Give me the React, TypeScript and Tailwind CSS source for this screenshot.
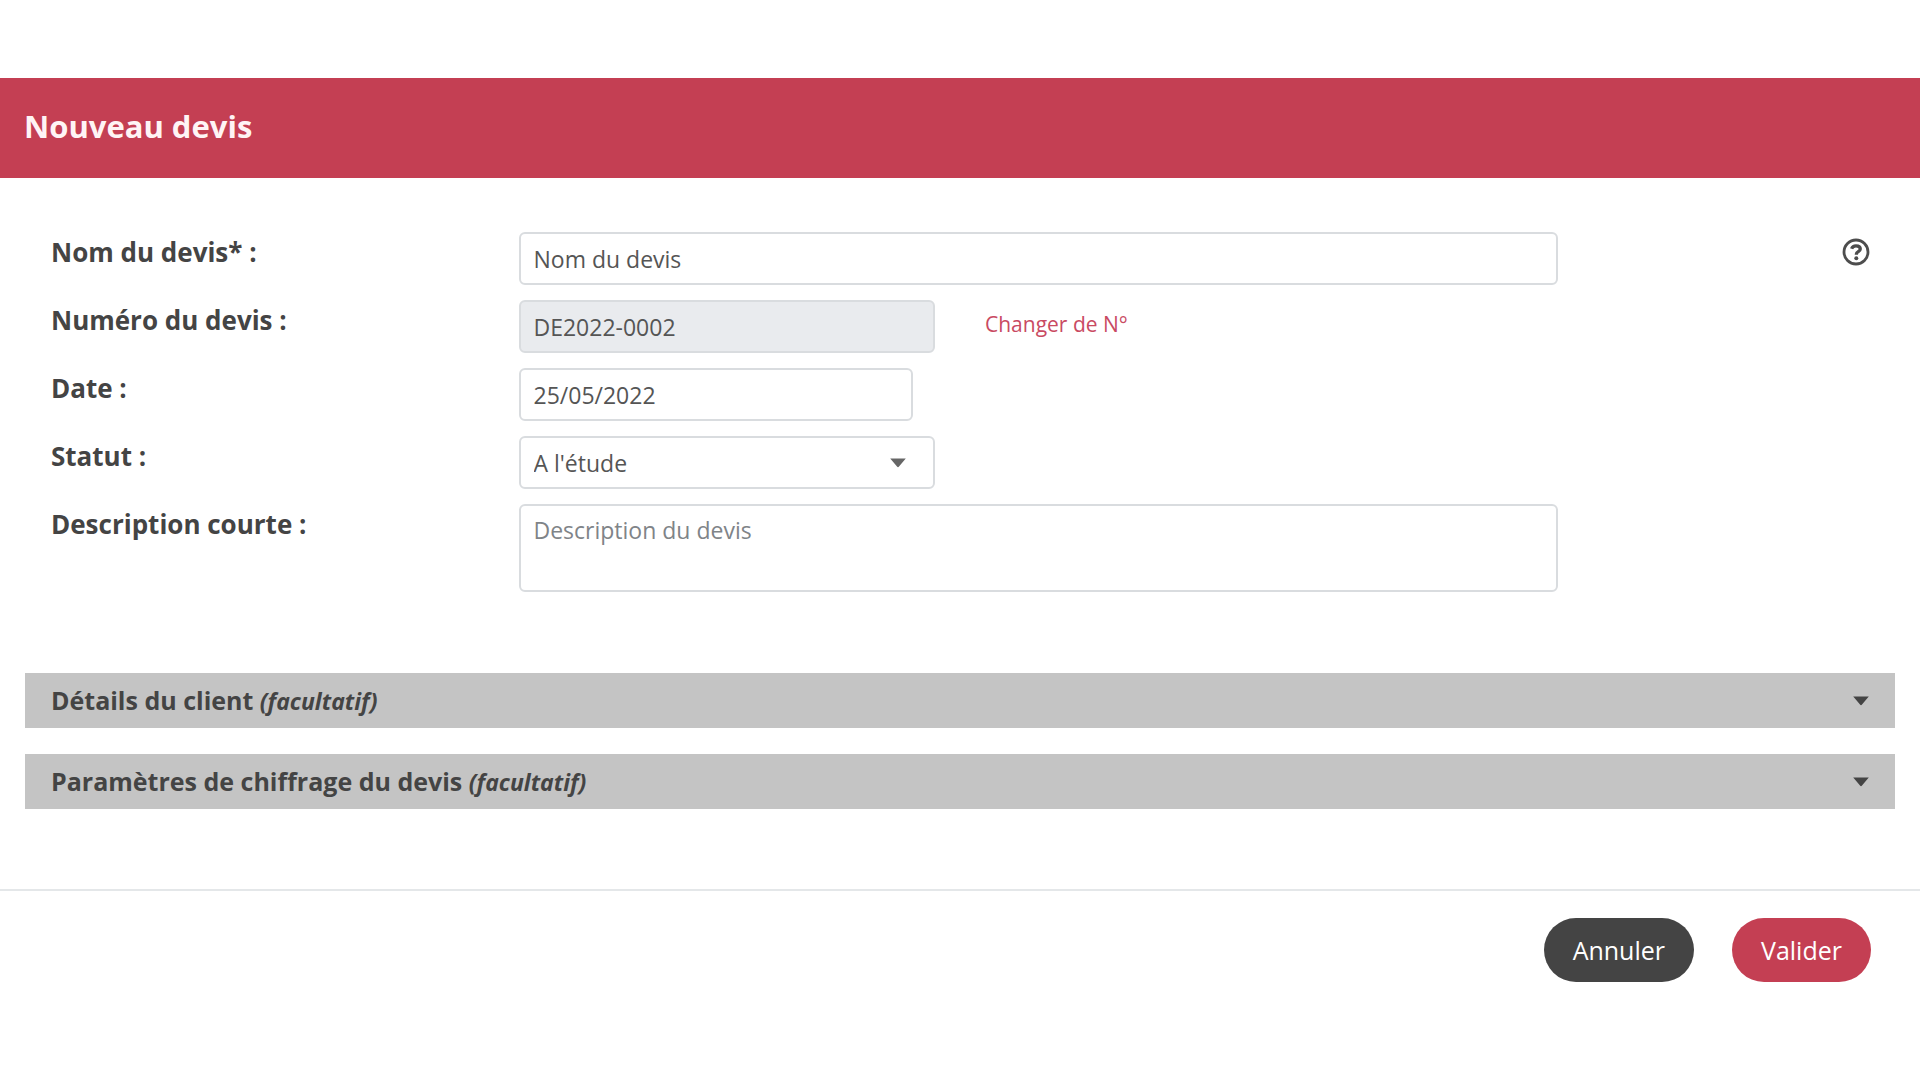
import { useState } from "react"
import type { FormEvent } from "react"

const labelClass = "col-span-3 px-[26px] text-[26px] leading-10 font-bold"
const fieldClass = "block w-full h-[53px] px-[13px] border-2 border-[#d9dcdf] rounded-md bg-white text-[23px] leading-8 text-[#555555] outline-none focus:border-[#c43f53]"

const Caret = ({ className = "" }: { className?: string }) => (
  <svg className={className} width="18" height="10" viewBox="0 0 18 10" fill="currentColor" aria-hidden="true">
    <path d="M1.2 0.5h15.6L10 8.6a1.3 1.3 0 0 1-2 0z" />
  </svg>
)

const HelpIcon = () => (
  <svg width="28" height="28" viewBox="0 0 28 28" fill="none" stroke="currentColor" aria-hidden="true">
    <circle cx="14" cy="14" r="12" strokeWidth="2.8" />
    <path d="M9.6 10.8c.8-2.2 2.4-3 4.4-3 2.5 0 4.3 1.2 4.3 3.3 0 2.6-3.9 2.5-3.9 5v.6" strokeWidth="3.3" />
    <circle cx="14.3" cy="20.2" r="2" fill="currentColor" stroke="none" />
  </svg>
)

const sections = [
  { id: "client", title: "Détails du client" },
  { id: "params", title: "Paramètres de chiffrage du devis" }
]

const App = () => {
  const [name, setName] = useState<string>("Nom du devis")
  const [date, setDate] = useState<string>("25/05/2022")
  const [status, setStatus] = useState<string>("etude")
  const [description, setDescription] = useState<string>("")
  const [numberLocked, setNumberLocked] = useState<boolean>(true)
  const [quoteNumber, setQuoteNumber] = useState<string>("DE2022-0002")

  const handleSubmit = (e: FormEvent) => {
    e.preventDefault()
  }

  return (
    <div className="min-h-screen bg-white pt-[78px] font-['Open_Sans','Noto_Sans',sans-serif] text-[#444444]">

      {/* Header */}
      <header className="h-[100px] px-6 pt-7 bg-[#c43f53]">
        <h1 className="text-[31px] leading-10 font-bold text-[#fff4f5]">Nouveau devis</h1>
      </header>

      <form onSubmit={handleSubmit}>
        <div className="px-[25px] pt-[54px] pb-20">

          {/* Fields */}
          <div className="flex flex-col gap-[15px]">
            <div className="grid grid-cols-12">
              <label htmlFor="name" className={labelClass}>Nom du devis* :</label>
              <div className="col-span-7 pl-[26px] pr-[25px]">
                <input id="name" type="text" value={name} onChange={(e) => setName(e.target.value)} className={fieldClass} />
              </div>
              <div className="col-span-2 flex items-start justify-end px-[25px] pt-1.5">
                <button type="button" aria-label="Aide" className="text-[#4d4d4d]">
                  <HelpIcon />
                </button>
              </div>
            </div>

            <div className="grid grid-cols-12">
              <label htmlFor="number" className={labelClass}>Numéro du devis :</label>
              <div className="col-span-3 pl-[26px] pr-[25px]">
                <input
                  id="number"
                  type="text"
                  value={quoteNumber}
                  readOnly={numberLocked}
                  onChange={(e) => setQuoteNumber(e.target.value)}
                  className={`${fieldClass} read-only:bg-[#e9ebee]`}
                />
              </div>
              <div className="col-span-6 px-[25px] pt-2">
                <a
                  href="#number"
                  onClick={() => setNumberLocked(false)}
                  className="text-[21px] leading-8 text-[#c94a62]"
                >
                  Changer de N°
                </a>
              </div>
            </div>

            <div className="grid grid-cols-12">
              <label htmlFor="date" className={labelClass}>Date :</label>
              <div className="col-span-3 pl-[26px] pr-[47px]">
                <input id="date" type="text" value={date} onChange={(e) => setDate(e.target.value)} className={fieldClass} />
              </div>
            </div>

            <div className="grid grid-cols-12">
              <label htmlFor="status" className={labelClass}>Statut :</label>
              <div className="col-span-3 pl-[26px] pr-[25px]">
                <div className="relative">
                  <select id="status" value={status} onChange={(e) => setStatus(e.target.value)} className={`${fieldClass} appearance-none`}>
                    <option value="etude">A l'étude</option>
                    <option value="envoye">Envoyé</option>
                    <option value="accepte">Accepté</option>
                  </select>
                  <Caret className="absolute right-7 top-1/2 -translate-y-1/2 pointer-events-none text-[#666666]" />
                </div>
              </div>
            </div>

            <div className="grid grid-cols-12">
              <label htmlFor="description" className={labelClass}>Description courte :</label>
              <div className="col-span-7 pl-[26px] pr-[25px]">
                <textarea
                  id="description"
                  value={description}
                  onChange={(e) => setDescription(e.target.value)}
                  placeholder="Description du devis"
                  className="block w-full h-[88px] px-[13px] py-2 border-2 border-[#d9dcdf] rounded-md bg-white text-[23px] leading-8 placeholder:text-[#7f8488] resize-none outline-none focus:border-[#c43f53]"
                />
              </div>
            </div>
          </div>

          {/* Collapsed sections */}
          <div className="flex flex-col gap-[26px] mt-[81px]">
            {sections.map((s) => (
              <button
                key={s.id}
                type="button"
                aria-expanded={false}
                className="flex items-center justify-between w-full h-[55px] pl-[26px] pr-[25px] bg-[#c4c4c4] text-left"
              >
                <span className="text-[25px] leading-9 font-bold">
                  {s.title} <em className="text-[23px]">(facultatif)</em>
                </span>
                <Caret />
              </button>
            ))}
          </div>
        </div>

        {/* Footer */}
        <footer className="flex justify-end gap-[38px] px-[49px] pt-[27px] border-t-2 border-[#e4e7e9]">
          <button type="button" className="h-16 px-[29px] rounded-full bg-[#444444] text-[25px] leading-9 text-white">Annuler</button>
          <button type="submit" className="h-16 px-[29px] rounded-full bg-[#c43f53] text-[25px] leading-9 text-white">Valider</button>
        </footer>
      </form>
    </div>
  )
}

export default App
